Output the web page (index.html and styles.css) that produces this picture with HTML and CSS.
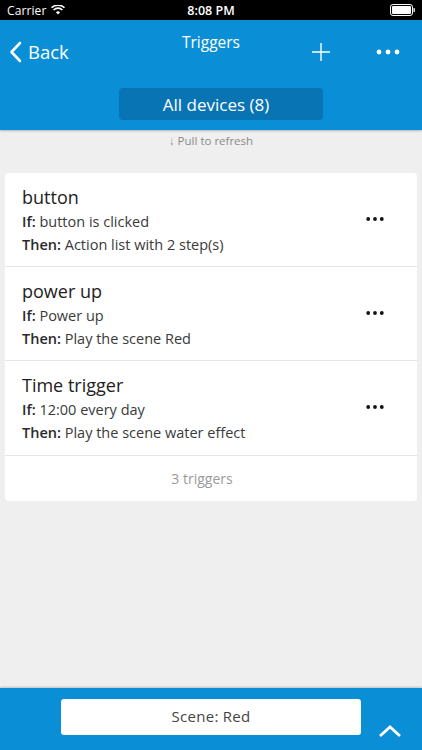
FILE: index.html
```html
<!DOCTYPE html>
<html>
<head>
<meta charset="utf-8">
<link rel="stylesheet" href="styles.css">
</head>
<body>
<div class="screen">
  <div class="status">
    <div class="status-left">Carrier
      <svg class="wifi" width="14" height="10" viewBox="0 0 14 10"><path d="M7 9.5 L4.9 7.2 A3 3 0 0 1 9.1 7.2 Z" fill="#fff"/><path d="M2.6 5 A6.2 6.2 0 0 1 11.4 5" stroke="#fff" stroke-width="1.6" fill="none"/><path d="M0.5 2.8 A9.2 9.2 0 0 1 13.5 2.8" stroke="#fff" stroke-width="1.6" fill="none"/></svg>
    </div>
    <div class="status-time">8:08 PM</div>
    <div class="status-right">
      <svg width="25" height="12" viewBox="0 0 25 12"><rect x="0.5" y="0.5" width="22" height="11" rx="2.5" fill="none" stroke="#fff" stroke-width="1"/><rect x="2" y="2" width="19" height="8" rx="1" fill="#fff"/><rect x="23.5" y="4" width="1.3" height="4" rx="0.6" fill="#fff"/></svg>
    </div>
  </div>
  <header class="topbar">
    <div class="navrow">
      <div class="back">
        <svg width="13" height="22" viewBox="0 0 13 22"><path d="M11 2 L2.5 11 L11 20" stroke="#fff" stroke-width="2.6" fill="none" stroke-linecap="round" stroke-linejoin="round"/></svg>
        <span>Back</span>
      </div>
      <div class="title">Triggers</div>
      <div class="actions">
        <svg class="plus" width="20" height="20" viewBox="0 0 20 20"><path d="M10 1 V19 M1 10 H19" stroke="#fff" stroke-width="1.4"/></svg>
        <svg class="more" width="24" height="6" viewBox="0 0 24 6"><circle cx="3" cy="3" r="2.4" fill="#fff"/><circle cx="12" cy="3" r="2.4" fill="#fff"/><circle cx="21" cy="3" r="2.4" fill="#fff"/></svg>
      </div>
    </div>
    <div class="filter-row">
      <div class="filter">All devices (8)</div>
    </div>
  </header>
  <div class="refresh">↓ Pull to refresh</div>
  <main class="card">
    <div class="row">
      <div class="info">
        <div class="name">button</div>
        <div class="line"><b>If:</b> button is clicked</div>
        <div class="line"><b>Then:</b> Action list with 2 step(s)</div>
      </div>
      <svg class="rowmore" width="18" height="4" viewBox="0 0 18 4"><circle cx="2.2" cy="2" r="1.9" fill="#111"/><circle cx="9" cy="2" r="1.9" fill="#111"/><circle cx="15.8" cy="2" r="1.9" fill="#111"/></svg>
    </div>
    <div class="row">
      <div class="info">
        <div class="name">power up</div>
        <div class="line"><b>If:</b> Power up</div>
        <div class="line"><b>Then:</b> Play the scene Red</div>
      </div>
      <svg class="rowmore" width="18" height="4" viewBox="0 0 18 4"><circle cx="2.2" cy="2" r="1.9" fill="#111"/><circle cx="9" cy="2" r="1.9" fill="#111"/><circle cx="15.8" cy="2" r="1.9" fill="#111"/></svg>
    </div>
    <div class="row last">
      <div class="info">
        <div class="name">Time trigger</div>
        <div class="line"><b>If:</b> 12:00 every day</div>
        <div class="line"><b>Then:</b> Play the scene water effect</div>
      </div>
      <svg class="rowmore" width="18" height="4" viewBox="0 0 18 4"><circle cx="2.2" cy="2" r="1.9" fill="#111"/><circle cx="9" cy="2" r="1.9" fill="#111"/><circle cx="15.8" cy="2" r="1.9" fill="#111"/></svg>
    </div>
    <div class="count">3 triggers</div>
  </main>
  <div class="spacer"></div>
  <footer class="bottombar">
    <div class="scene">Scene: Red</div>
    <svg class="up" width="24" height="14" viewBox="0 0 24 14"><path d="M2 12 L12 3 L22 12" stroke="#fff" stroke-width="2.8" fill="none"/></svg>
  </footer>
</div>
</body>
</html>
```
FILE: styles.css
```css
* { box-sizing: border-box; }
html, body { margin: 0; padding: 0; }
body {
  width: 422px;
  height: 750px;
  background: #efefef;
  font-family: "Open Sans", "Liberation Sans", sans-serif;
  overflow: hidden;
}
.screen {
  height: 750px;
  display: flex;
  flex-direction: column;
}
.status {
  height: 20px;
  background: #000;
  color: #fff;
  display: flex;
  align-items: center;
  justify-content: space-between;
  padding: 0 7px 0 7px;
  font-size: 12px;
  position: relative;
}
.status-left { display: flex; align-items: center; gap: 5px; letter-spacing: 0.1px; }
.status-time {
  position: absolute;
  left: 0; right: 0;
  text-align: center;
  font-weight: 600;
  font-size: 12.5px;
}
.status-right { display: flex; align-items: center; }
.topbar {
  background: #0a8fd6;
  height: 110px;
  box-shadow: 0 1px 2px rgba(0,0,0,0.25);
  position: relative;
  z-index: 1;
}
.navrow {
  height: 60px;
  display: flex;
  align-items: flex-start;
  position: relative;
}
.back {
  display: flex;
  align-items: center;
  gap: 6px;
  color: #fff;
  font-size: 18.5px;
  padding: 20px 0 0 9px;
  height: 42px;
}
.back svg { margin-top: 1px; }
.title {
  position: absolute;
  left: 0; right: 0;
  top: 11px;
  text-align: center;
  color: #fff;
  font-size: 15.5px;
  font-weight: 500;
  pointer-events: none;
}
.actions {
  margin-left: auto;
  display: flex;
  align-items: center;
  gap: 45px;
  padding: 22px 22px 0 0;
}
.filter-row {
  display: flex;
  justify-content: center;
  padding: 8px 0 0 20px;
}
.filter {
  width: 204px;
  height: 32px;
  background: #0974b4;
  border-radius: 4px;
  color: #fff;
  font-size: 17px;
  display: flex;
  align-items: center;
  justify-content: center;
  padding-right: 10px;
}
.refresh {
  text-align: center;
  color: #8a8a8a;
  font-size: 11.5px;
  padding-top: 3px;
  height: 43px;
}
.card {
  margin: 0 5px;
  background: #fff;
  border-radius: 4px;
  display: flex;
  flex-direction: column;
}
.row {
  height: 94px;
  display: flex;
  align-items: center;
  padding: 0 33px 0 17px;
  border-bottom: 1px solid #e6e6e6;
}
.row.last { height: 95px; }
.info { flex: 1; padding-top: 2px; }
.name {
  font-size: 18px;
  color: #222;
  line-height: 22px;
  margin-bottom: 2px;
}
.line {
  font-size: 14.5px;
  color: #3a3a3a;
  line-height: 23px;
}
.line b { font-weight: 600; color: #2a2a2a; }
.rowmore { margin-top: -2px; }
.count {
  height: 45px;
  display: flex;
  align-items: center;
  justify-content: center;
  padding-right: 18px;
  color: #9a9a9a;
  font-size: 14px;
}
.spacer { flex: 1; }
.bottombar {
  height: 62px;
  background: #0a8fd6;
  box-shadow: 0 -1px 2px rgba(0,0,0,0.2);
  position: relative;
  display: flex;
  align-items: flex-start;
}
.scene {
  margin: 11px 0 0 61px;
  width: 300px;
  height: 36px;
  padding-bottom: 2px;
  background: #fff;
  border-radius: 3px;
  display: flex;
  align-items: center;
  justify-content: center;
  font-size: 15px;
  color: #444;
  letter-spacing: 0.3px;
}
.up { margin: 36px 0 0 17px; }
```
